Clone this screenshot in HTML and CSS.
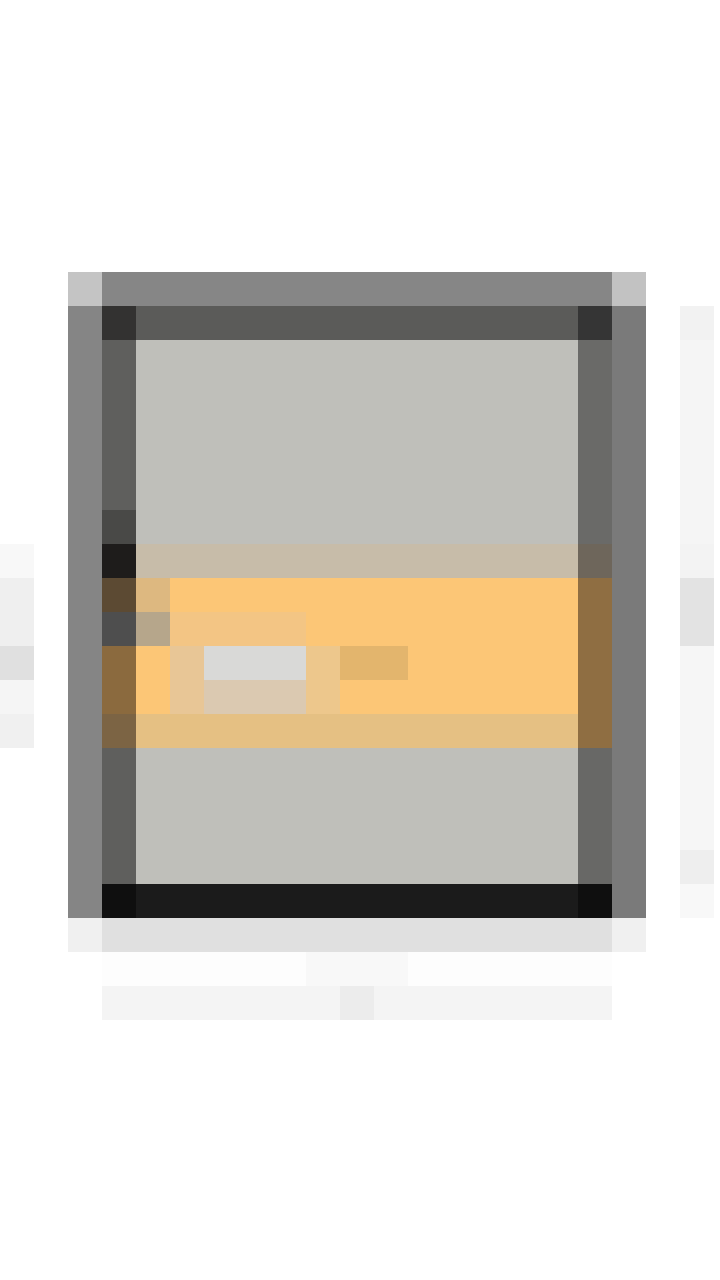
FILE: index.html
```html
<!DOCTYPE html>
<html lang="en">
<head>
<meta charset="utf-8">
<title>Pixel frame</title>
<link rel="stylesheet" href="styles.css">
</head>
<body>
<main class="canvas">
  <div class="b tl-corner"></div>
  <div class="b top-bar"></div>
  <div class="b tr-corner"></div>
  <div class="b left-outer"></div>
  <div class="b right-outer"></div>
  <div class="b in-tl"></div>
  <div class="b in-top"></div>
  <div class="b in-tr"></div>

  <div class="b l1"></div>
  <div class="b l2"></div>
  <div class="b l3"></div>
  <div class="b l4"></div>
  <div class="b l5"></div>
  <div class="b l6"></div>
  <div class="b l7"></div>
  <div class="b l8"></div>
  <div class="b l9"></div>

  <div class="b r1"></div>
  <div class="b r2"></div>
  <div class="b r3"></div>
  <div class="b r4"></div>
  <div class="b r5"></div>

  <div class="b i1"></div>
  <div class="b i2"></div>
  <div class="b i3"></div>
  <div class="b i4"></div>
  <div class="b i5"></div>
  <div class="b i6"></div>

  <div class="b d1"></div>
  <div class="b d2"></div>
  <div class="b d3"></div>
  <div class="b d4"></div>
  <div class="b d5"></div>
  <div class="b d6"></div>
  <div class="b d7"></div>
  <div class="b d8"></div>

  <div class="b s1"></div>
  <div class="b s2"></div>
  <div class="b s3"></div>
  <div class="b s4"></div>
  <div class="b s5"></div>
  <div class="b s6"></div>
  <div class="b s7"></div>

  <div class="b e1"></div>
  <div class="b e2"></div>
  <div class="b e3"></div>
  <div class="b e4"></div>
  <div class="b e5"></div>
  <div class="b e6"></div>

  <div class="b f1"></div>
  <div class="b f2"></div>
  <div class="b f3"></div>
  <div class="b f4"></div>
  <div class="b f5"></div>
  <div class="b f6"></div>
  <div class="b f7"></div>
</main>
</body>
</html>
```

FILE: styles.css
```css
html, body {
  margin: 0;
  padding: 0;
  background: #ffffff;
}

.canvas {
  display: grid;
  grid-template-columns: repeat(22, 34px);
  grid-template-rows: repeat(38, 34px);
  width: 720px;
  height: 1280px;
  overflow: hidden;
}

/* outer frame */
.tl-corner { grid-column: 3 / 4; grid-row: 9 / 10; background: #c4c4c4; }
.top-bar { grid-column: 4 / 19; grid-row: 9 / 10; background: #868686; }
.tr-corner { grid-column: 19 / 20; grid-row: 9 / 10; background: #c2c2c2; }
.left-outer { grid-column: 3 / 4; grid-row: 10 / 28; background: #858585; }
.right-outer { grid-column: 19 / 20; grid-row: 10 / 28; background: #7a7a7a; }

/* inner frame top */
.in-tl { grid-column: 4 / 5; grid-row: 10 / 11; background: #333231; }
.in-top { grid-column: 5 / 18; grid-row: 10 / 11; background: #5b5b59; }
.in-tr { grid-column: 18 / 19; grid-row: 10 / 11; background: #353535; }

/* inner frame left column */
.l1 { grid-column: 4 / 5; grid-row: 11 / 16; background: #5f5f5d; }
.l2 { grid-column: 4 / 5; grid-row: 16 / 17; background: #494947; }
.l3 { grid-column: 4 / 5; grid-row: 17 / 18; background: #1e1c1b; }
.l4 { grid-column: 4 / 5; grid-row: 18 / 19; background: #5c4a33; }
.l5 { grid-column: 4 / 5; grid-row: 19 / 20; background: #4e4e4e; }
.l6 { grid-column: 4 / 5; grid-row: 20 / 22; background: #8b6a3e; }
.l7 { grid-column: 4 / 5; grid-row: 22 / 23; background: #7c6444; }
.l8 { grid-column: 4 / 5; grid-row: 23 / 27; background: #5f5f5d; }
.l9 { grid-column: 4 / 5; grid-row: 27 / 28; background: #0f0f0f; }

/* inner frame right column */
.r1 { grid-column: 18 / 19; grid-row: 11 / 17; background: #6a6a68; }
.r2 { grid-column: 18 / 19; grid-row: 17 / 18; background: #6e665b; }
.r3 { grid-column: 18 / 19; grid-row: 18 / 23; background: #8f6e42; }
.r4 { grid-column: 18 / 19; grid-row: 23 / 27; background: #686866; }
.r5 { grid-column: 18 / 19; grid-row: 27 / 28; background: #0f0f0f; }

/* interior */
.i1 { grid-column: 5 / 18; grid-row: 11 / 17; background: #bfbfba; }
.i2 { grid-column: 5 / 18; grid-row: 17 / 18; background: #c7bca9; }
.i3 { grid-column: 5 / 18; grid-row: 18 / 22; background: #fcc676; }
.i4 { grid-column: 5 / 18; grid-row: 22 / 23; background: #e5c083; }
.i5 { grid-column: 5 / 18; grid-row: 23 / 27; background: #bfbfba; }
.i6 { grid-column: 5 / 18; grid-row: 27 / 28; background: #1b1b1b; }

/* interior details */
.d1 { grid-column: 5 / 6; grid-row: 18 / 19; background: #ddb880; }
.d2 { grid-column: 5 / 6; grid-row: 19 / 20; background: #b6a68b; }
.d3 { grid-column: 6 / 10; grid-row: 19 / 20; background: #f3c584; }
.d4 { grid-column: 6 / 7; grid-row: 20 / 22; background: #e8c696; }
.d5 { grid-column: 7 / 10; grid-row: 20 / 21; background: #d9d9d7; }
.d6 { grid-column: 7 / 10; grid-row: 21 / 22; background: #dbc9b1; }
.d7 { grid-column: 10 / 11; grid-row: 20 / 22; background: #edc78c; }
.d8 { grid-column: 11 / 13; grid-row: 20 / 21; background: #e3b56d; }

/* shadow below */
.s1 { grid-column: 3 / 4; grid-row: 28 / 29; background: #f0f0f0; }
.s2 { grid-column: 4 / 19; grid-row: 28 / 29; background: #e0e0e0; }
.s3 { grid-column: 19 / 20; grid-row: 28 / 29; background: #f0f0f0; }
.s4 { grid-column: 4 / 19; grid-row: 29 / 30; background: #fdfdfd; }
.s5 { grid-column: 10 / 13; grid-row: 29 / 30; background: #f8f8f8; }
.s6 { grid-column: 4 / 19; grid-row: 30 / 31; background: #f4f4f4; }
.s7 { grid-column: 11 / 12; grid-row: 30 / 31; background: #ececec; }

/* left edge stripes */
.e1 { grid-column: 1 / 2; grid-row: 17 / 18; background: #f8f8f8; }
.e2 { grid-column: 1 / 2; grid-row: 18 / 20; background: #efefef; }
.e3 { grid-column: 1 / 2; grid-row: 20 / 21; background: #e0e0e0; }
.e4 { grid-column: 1 / 2; grid-row: 21 / 22; background: #f5f5f5; }
.e5 { grid-column: 1 / 2; grid-row: 22 / 23; background: #f0f0f0; }
.e6 { display: none; }

/* right edge stripes */
.f1 { grid-column: 21 / 22; grid-row: 10 / 11; background: #f2f2f2; }
.f2 { grid-column: 21 / 22; grid-row: 11 / 17; background: #f5f5f5; }
.f3 { grid-column: 21 / 22; grid-row: 17 / 18; background: #f3f3f3; }
.f4 { grid-column: 21 / 22; grid-row: 18 / 20; background: #e3e3e3; }
.f5 { grid-column: 21 / 22; grid-row: 20 / 26; background: #f6f6f6; }
.f6 { grid-column: 21 / 22; grid-row: 26 / 27; background: #eeeeee; }
.f7 { grid-column: 21 / 22; grid-row: 27 / 28; background: #f8f8f8; }
```
